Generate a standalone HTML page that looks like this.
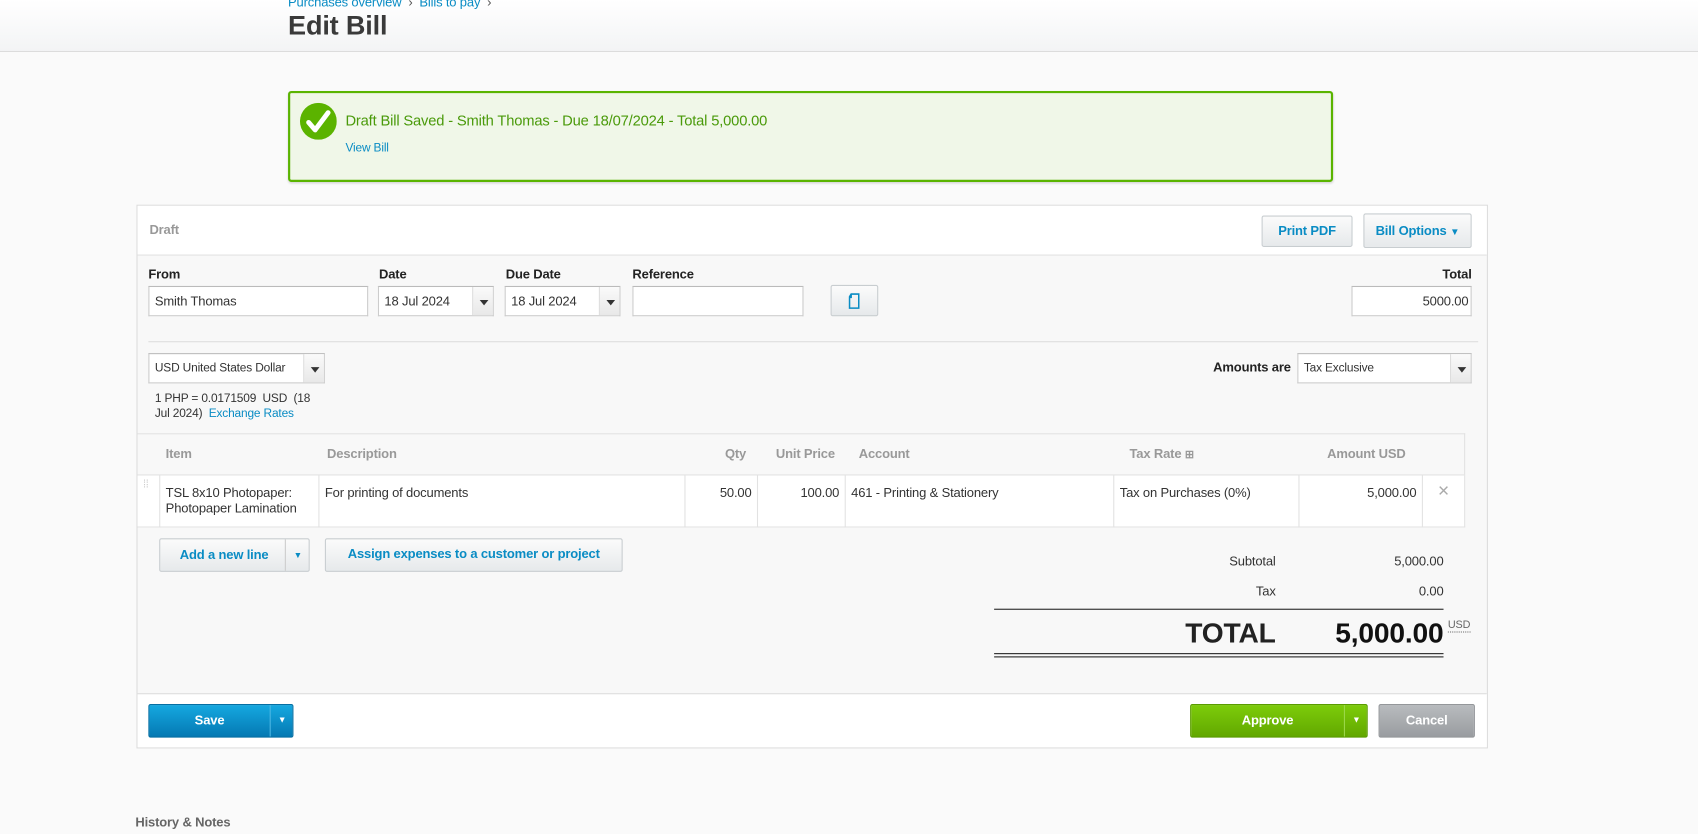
<!DOCTYPE html><html><head><meta charset="utf-8"><style>
*{box-sizing:border-box;margin:0;padding:0}
body{width:1698px;height:834px;overflow:hidden;background:#fafafa;font-family:"Liberation Sans",Arial,sans-serif;font-size:12px;color:#333}
#w{position:absolute;left:0;top:0;width:1568px;height:770px;transform:scale(1.08291,1.0831);transform-origin:0 0;letter-spacing:-0.15px}
.a{position:absolute}
.hdr{left:0;top:0;width:1568px;height:48px;background:linear-gradient(#fff,#f3f4f5);border-bottom:1px solid #dcdcdc}
.blue{color:#0a8cc4}
.lbl{font-weight:bold;font-size:12px;color:#222}
.inp{background:#fff;border:1px solid #ccc;border-top-color:#bbb;height:28px;padding:0 5px;line-height:26px;font-size:12px}
.arr{position:absolute;right:0;top:0;bottom:0;width:19px;border-left:1px solid #ddd;background:linear-gradient(#fafafa,#e8e8e8)}
.arr:after{content:"";position:absolute;left:6px;top:12px;border:4px solid transparent;border-top:5px solid #333}
.btn{background:linear-gradient(#fbfbfb,#e6e9eb);border:1px solid #c8cdd0;border-radius:2px;color:#0a8cc4;font-weight:bold;text-align:center}
.th{position:absolute;top:11px;font-weight:bold;color:#999;font-size:12px}
.td{position:absolute;top:0;height:48px;border-right:1px solid #e2e2e2;padding:9px 5px;line-height:14px}
</style></head><body><div id="w">
<div class="a hdr"></div>
<div class="a blue" style="left:266px;top:-5px;font-size:12px">Purchases overview <span style="color:#555">&nbsp;›&nbsp;</span> Bills to pay <span style="color:#555">&nbsp;›</span></div>
<div class="a" style="left:266px;top:10px;font-size:25px;font-weight:bold;color:#3a3a3a">Edit Bill</div>

<div class="a" style="left:266px;top:84px;width:965px;height:84px;border:2px solid #5ab400;border-radius:3px;background:#f0f7e8;box-shadow:0 1px 2px rgba(0,0,0,.15)"></div>
<svg class="a" style="left:277px;top:95px" width="34" height="34"><circle cx="17" cy="17" r="17" fill="#5bb300"/><path d="M8 18l6 7L26 9" stroke="#fff" stroke-width="4.5" fill="none" stroke-linecap="round" stroke-linejoin="round"/></svg>
<div class="a" style="left:319px;top:104px;font-size:13.6px;color:#4a9a0a">Draft Bill Saved - Smith Thomas - Due 18/07/2024 - Total 5,000.00</div>
<div class="a blue" style="left:319px;top:131px;font-size:11px">View Bill</div>

<div class="a" style="left:126px;top:189px;width:1248px;height:502px;border:1px solid #dcdcdc;background:#f8f8f8"></div>
<div class="a" style="left:127px;top:190px;width:1246px;height:46px;background:#fff;border-bottom:1px solid #e2e2e2"></div>
<div class="a" style="left:138px;top:205px;font-weight:bold;color:#999">Draft</div>
<div class="a btn" style="left:1165px;top:199px;width:84px;height:29px;line-height:27px">Print PDF</div>
<div class="a btn" style="left:1259px;top:197px;width:100px;height:32px;line-height:31px">Bill Options <span style="font-size:9px">▼</span></div>

<div class="a lbl" style="left:137px;top:246px">From</div>
<div class="a lbl" style="left:350px;top:246px">Date</div>
<div class="a lbl" style="left:467px;top:246px">Due Date</div>
<div class="a lbl" style="left:584px;top:246px">Reference</div>
<div class="a lbl" style="left:1320px;top:246px;width:39px;text-align:right">Total</div>
<div class="a inp" style="left:137px;top:264px;width:203px">Smith Thomas</div>
<div class="a inp" style="left:349px;top:264px;width:107px">18 Jul 2024<div class="arr"></div></div>
<div class="a inp" style="left:466px;top:264px;width:107px">18 Jul 2024<div class="arr"></div></div>
<div class="a inp" style="left:584px;top:264px;width:158px"></div>
<div class="a btn" style="left:767px;top:263px;width:44px;height:29px"><svg width="14" height="16" style="margin-top:6px"><path d="M4 1.5h7v13H2.5V4z M4 1.5v3H2.5" stroke="#0a8cc4" stroke-width="1.4" fill="none"/></svg></div>
<div class="a inp" style="left:1248px;top:264px;width:111px;text-align:right;padding-right:2px">5000.00</div>
<div class="a" style="left:137px;top:315px;width:1228px;height:1px;background:#ddd"></div>

<div class="a inp" style="left:137px;top:326px;width:163px;font-size:11px">USD United States Dollar<div class="arr"></div></div>
<div class="a" style="left:143px;top:361px;font-size:11px;line-height:14px">1 PHP = 0.0171509&nbsp; USD&nbsp; (18<br>Jul 2024)&nbsp; <span class="blue">Exchange Rates</span></div>
<div class="a lbl" style="left:1100px;top:332px;width:92px;text-align:right">Amounts are</div>
<div class="a inp" style="left:1198px;top:326px;width:161px;font-size:11px">Tax Exclusive<div class="arr"></div></div>

<div class="a" style="left:127px;top:400px;width:1226px;height:87px;border:1px solid #e2e2e2;border-left:none;background:#f8f8f8">
<div class="th" style="left:26px">Item</div><div class="th" style="left:175px">Description</div>
<div class="th" style="left:520px;width:42px;text-align:right">Qty</div>
<div class="th" style="left:580px;width:64px;text-align:right">Unit Price</div>
<div class="th" style="left:666px">Account</div>
<div class="th" style="left:916px">Tax Rate <span style="font-size:10px">⊞</span></div>
<div class="th" style="left:1080px;width:91px;text-align:right">Amount USD</div>
<div class="a" style="left:0;top:37px;width:1225px;height:48px;background:#fff;border-top:1px solid #e2e2e2">
<div class="td" style="left:0;width:21px;color:#ccc;padding:6px 5px;font-size:10px;line-height:6px">⁞⁞</div>
<div class="td" style="left:21px;width:147px">TSL 8x10 Photopaper:<br>Photopaper Lamination</div>
<div class="td" style="left:168px;width:338px">For printing of documents</div>
<div class="td" style="left:506px;width:67px;text-align:right">50.00</div>
<div class="td" style="left:573px;width:81px;text-align:right">100.00</div>
<div class="td" style="left:654px;width:248px">461 - Printing &amp; Stationery</div>
<div class="td" style="left:902px;width:171px">Tax on Purchases (0%)</div>
<div class="td" style="left:1073px;width:114px;text-align:right">5,000.00</div>
<div class="td" style="left:1187px;width:38px;border:none;text-align:center;color:#aaa;font-size:18px;padding-top:7px">×</div>
</div></div>

<div class="a btn" style="left:147px;top:497px;width:139px;height:31px;line-height:29px;text-align:left;padding-left:18px">Add a new line<span style="position:absolute;left:115px;top:0;bottom:0;border-left:1px solid #ccc;width:23px;text-align:center;font-size:8px">▼</span></div>
<div class="a btn" style="left:300px;top:497px;width:275px;height:31px;line-height:27px">Assign expenses to a customer or project</div>

<div class="a" style="left:1100px;top:511px;width:78px;text-align:right">Subtotal</div>
<div class="a" style="left:1240px;top:511px;width:93px;text-align:right">5,000.00</div>
<div class="a" style="left:1100px;top:539px;width:78px;text-align:right">Tax</div>
<div class="a" style="left:1240px;top:539px;width:93px;text-align:right">0.00</div>
<div class="a" style="left:918px;top:562px;width:415px;height:1px;background:#222"></div>
<div class="a" style="left:1000px;top:569px;width:178px;text-align:right;font-size:26px;font-weight:bold;color:#222">TOTAL</div>
<div class="a" style="left:1180px;top:569px;width:153px;text-align:right;font-size:26px;font-weight:bold;color:#111">5,000.00</div>
<div class="a" style="left:1337px;top:572px;font-size:10px;color:#666;border-bottom:1px dotted #666;line-height:11px">USD</div>
<div class="a" style="left:918px;top:603px;width:415px;height:4px;border-top:1px solid #222;border-bottom:1px solid #222"></div>

<div class="a" style="left:127px;top:640px;width:1246px;height:50px;background:#fff;border-top:1px solid #ddd"></div>
<div class="a" style="left:137px;top:650px;width:134px;height:31px;border-radius:2px;background:linear-gradient(#15a8e0,#0579b3);border:1px solid #066fa3;color:#fff;font-weight:bold;line-height:28px"><span style="position:absolute;left:0;width:111px;text-align:center">Save</span><span style="position:absolute;left:111px;top:0;bottom:0;width:22px;border-left:1px solid #4cb6e3;text-align:center;font-size:8px">▼</span></div>
<div class="a" style="left:1099px;top:650px;width:164px;height:31px;border-radius:2px;background:linear-gradient(#7dcc0a,#62a800);border:1px solid #5a9c00;color:#fff;font-weight:bold;line-height:28px"><span style="position:absolute;left:0;width:141px;text-align:center">Approve</span><span style="position:absolute;left:141px;top:0;bottom:0;width:22px;border-left:1px solid #9bd84a;text-align:center;font-size:8px">▼</span></div>
<div class="a" style="left:1273px;top:650px;width:89px;height:31px;border-radius:2px;background:linear-gradient(#b8bbbe,#999ca0);border:1px solid #94979a;color:#fff;font-weight:bold;line-height:28px;text-align:center">Cancel</div>

<div class="a" style="left:125px;top:752px;font-weight:bold;color:#666">History &amp; Notes</div>
</div></body></html>
